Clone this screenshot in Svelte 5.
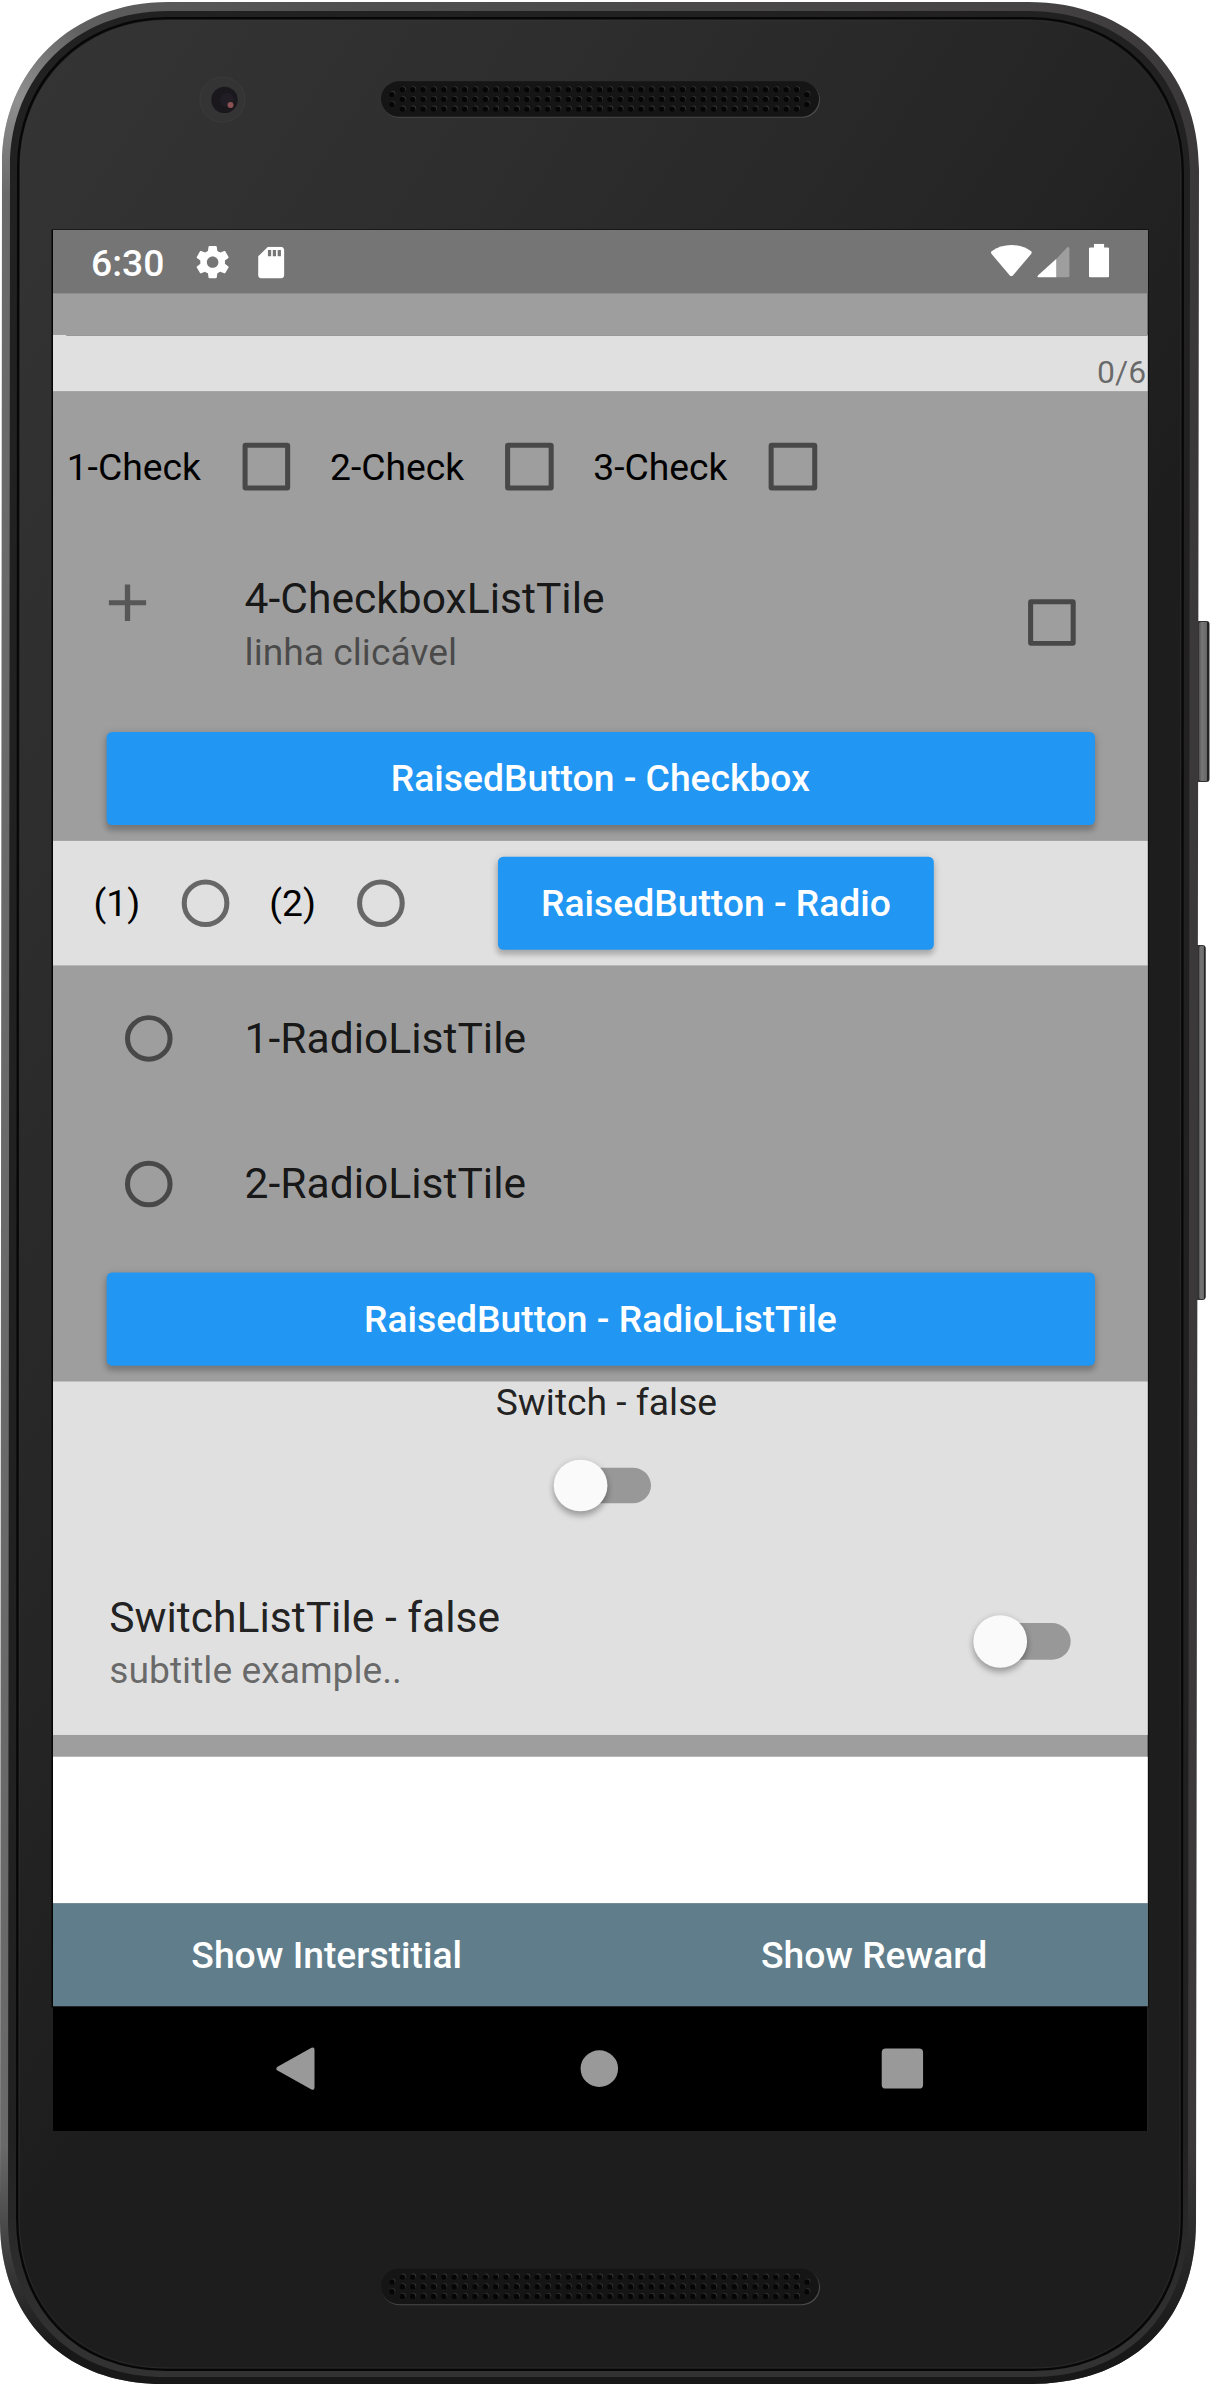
<script>
  const checks = ['1-Check', '2-Check', '3-Check'];
  const radios = ['(1)', '(2)'];
  const radioTiles = ['1-RadioListTile', '2-RadioListTile'];
  const actions = ['Show Interstitial', 'Show Reward'];

  // Speaker grilles: three rows of holes, closed by a pair at either end.
  const columns = Array.from({ length: 39 }, (_, i) => 402.4 + i * 10.375);
  const rows = [8.3, 18, 27.7];
  const grilles = [81.3, 2268.7];
  const endHoles = [392, 807];
  const holes = [
    ...columns.flatMap((x) => rows.map((y) => [x, y])),
    ...endHoles.flatMap((x) => [13.2, 23].map((y) => [x, y])),
  ];
</script>

{#snippet switchControl()}
  <span class="switch"><span class="track"></span><span class="thumb"></span></span>
{/snippet}

<main class="device">
  <svg class="body" viewBox="0 0 1210 2385" aria-hidden="true">
    <defs>
      <linearGradient id="rim" x1="0" y1="0" x2="1" y2="0">
        <stop offset="0" stop-color="#6b6a6a" />
        <stop offset="0.1" stop-color="#5c5b5b" />
        <stop offset="0.3" stop-color="#504f4f" />
        <stop offset="0.85" stop-color="#454343" />
        <stop offset="1" stop-color="#3a3838" />
      </linearGradient>
      <radialGradient id="glint" gradientUnits="userSpaceOnUse" cx="18" cy="100" r="95">
        <stop offset="0" stop-color="#a0a0a0" stop-opacity=".7" />
        <stop offset="1" stop-color="#a0a0a0" stop-opacity="0" />
      </radialGradient>
      <linearGradient id="rimShade" x1="0" y1="0" x2="0" y2="1">
        <stop offset="0.9" stop-color="#1a1a1a" stop-opacity="0" />
        <stop offset="0.985" stop-color="#181818" />
      </linearGradient>
      <linearGradient id="lip" x1="0" y1="0" x2="0" y2="1">
        <stop offset="0.9" stop-color="#222121" />
        <stop offset="0.985" stop-color="#323232" />
      </linearGradient>
      <linearGradient id="face" gradientUnits="userSpaceOnUse" x1="0" y1="100" x2="1000" y2="760">
        <stop offset="0" stop-color="#343435" />
        <stop offset="0.35" stop-color="#2e2e2e" />
        <stop offset="0.75" stop-color="#252525" />
        <stop offset="1" stop-color="#1d1d1d" />
      </linearGradient>
      <linearGradient id="key" x1="0" y1="0" x2="1" y2="0">
        <stop offset="0" stop-color="#555" />
        <stop offset="0.3" stop-color="#777" />
        <stop offset="0.75" stop-color="#666" />
        <stop offset="0.85" stop-color="#222" />
      </linearGradient>
    </defs>
    <rect x="1190" y="621" width="19.5" height="161" rx="3" fill="#333" />
    <rect x="1199" y="622" width="10" height="159" rx="2" fill="url(#key)" />
    <rect x="1190" y="945" width="15.5" height="355" rx="3" fill="#333" />
    <rect x="1199" y="946" width="6.5" height="353" rx="2" fill="url(#key)" />

    {#each ['rim', 'glint', 'rimShade'] as paint}
      <path fill="url(#{paint})" d="M168 2H1028C1130 2 1199 70 1199 170L1196 2222C1196 2322 1132 2383 1032 2384H162C64 2384 0 2318 0 2222L2 164C2 70 72 2 168 2Z" />
    {/each}
    <path fill="url(#lip)" d="M168 11H1028C1124 11 1190 76 1190 172L1188 2220C1188 2312 1128 2377 1034 2377H164C70 2377 8 2312 8 2220L10 166C10 76 76 11 168 11Z" />
    <path fill="#111" stroke="#070707" stroke-width="2" d="M168 18H1028C1118 18 1183 82 1183 174L1182 2218C1182 2308 1122 2370 1034 2370H166C76 2370 17 2308 17 2218L18 168C18 82 80 18 168 18Z" />
    <path fill="url(#face)" stroke="#3c3c3c" stroke-opacity=".5" d="M168 20H1028C1116 20 1181 84 1181 174L1180 2218C1180 2306 1120 2368 1034 2368H166C78 2368 19 2306 19 2218L20 168C20 84 82 20 168 20Z" />

    <circle cx="222.5" cy="99.7" r="22.5" fill="#343434" stroke="#3b3b3b" />
    <circle cx="224.500" cy="99.9" r="13.2" fill="#1a181d" />
    <circle cx="227" cy="100" r="7" fill="#211d25" />
    <circle cx="230.5" cy="105" r="3" fill="#8b5153" />

    {#each grilles as top}
      <g transform="translate(0 {top})">
        <rect x="381.5" y="1" width="438.5" height="35.5" rx="17.7" fill="#4a4a4a" />
        <rect x="381" y="0" width="438" height="35.5" rx="17.7" fill="#151515" />
        {#each holes as [x, y]}
          <circle cx={x + 0.8} cy={y - 0.8} r="2.6" fill="#333" />
          <circle cx={x} cy={y} r="2.6" fill="#050505" />
        {/each}
      </g>
    {/each}
    <rect x="51.5" y="229.5" width="1097" height="1778" fill="#050505" />
  </svg>

  <div class="screen">
    <header class="status">
      <span class="time">6:30</span>
      <svg class="gear" viewBox="0 0 24 24"><path d="M19.43 12.98c.04-.32.07-.64.07-.98s-.03-.66-.07-.98l2.11-1.65c.19-.15.24-.42.12-.64l-2-3.46c-.12-.22-.39-.3-.61-.22l-2.49 1c-.52-.4-1.08-.73-1.69-.98l-.38-2.65C14.46 2.18 14.25 2 14 2h-4c-.25 0-.46.18-.49.42l-.38 2.65c-.61.25-1.17.59-1.69.98l-2.49-1c-.23-.09-.49 0-.61.22l-2 3.46c-.13.22-.07.49.12.64l2.11 1.65c-.04.32-.07.65-.07.98s.03.66.07.98l-2.11 1.65c-.19.15-.24.42-.12.64l2 3.46c.12.22.39.3.61.22l2.49-1c.52.4 1.08.73 1.69.98l.38 2.65c.03.24.24.42.49.42h4c.25 0 .46-.18.49-.42l.38-2.65c.61-.25 1.17-.59 1.69-.98l2.49 1c.23.09.49 0 .61-.22l2-3.46c.12-.22.07-.49-.12-.64l-2.11-1.65zM12 15.5c-1.93 0-3.5-1.57-3.5-3.5s1.57-3.5 3.5-3.5 3.5 1.57 3.5 3.5-1.57 3.5-3.5 3.5z" /></svg>
      <svg class="card" viewBox="4 2 16 20"><path d="M18 2h-8L4.02 8 4 20c0 1.1.9 2 2 2h12c1.1 0 2-.9 2-2V4c0-1.1-.9-2-2-2zm-6 6h-2V4h2v4zm3 0h-2V4h2v4zm3 0h-2V4h2v4z" /></svg>
      <span class="spacer"></span>
      <svg class="wifi" viewBox="0 0 41 32"><path d="M1 6.5C12-2 29-2 40 6.500Q41 7.500 40.200 9L22 31Q20.500 32.500 19 31L.8 9Q0 7.500 1 6.500Z" /></svg>
      <svg class="signal" viewBox="0 0 32 31"><path opacity=".3" d="M18.500 12.500 29.500.8Q32-.8 32 2V29Q32 31 30 31H18.500Z" /><path d="M18.700 12.300V31H1.500Q-.8 31 .7 29Z" /></svg>
      <svg class="battery" viewBox="0 0 20 34"><path d="M5 0H15V3.800H18.500Q20 3.800 20 5.300V32.500Q20 34 18.500 34H1.500Q0 34 0 32.500V5.300Q0 3.800 1.500 3.800H5Z" /></svg>
    </header>

    <div class="gap"></div>
    <section class="field"><span class="underline"></span><span class="counter">0/6</span></section>

    <section class="dark checks">
      <div class="checkrow">
        {#each checks as label}
          <span class="checklabel">{label}</span>
          <span class="target"><span class="box"></span></span>
        {/each}
      </div>
      <div class="tile two">
        <svg class="plus" viewBox="0 0 24 24"><path d="M19 13h-6v6h-2v-6H5v-2h6V5h2v6h6z" /></svg>
        <div class="lines"><div class="title">4-CheckboxListTile</div><div class="sub">linha clicável</div></div>
        <span class="target small"><span class="box"></span></span>
      </div>
      <div class="wide"><button>RaisedButton - Checkbox</button></div>
    </section>

    <section class="light radiorow">
      {#each radios as label}
        <span class="radiolabel">{label}</span>
        <span class="target"><span class="ring"></span></span>
      {/each}
      <button class="compact">RaisedButton - Radio</button>
    </section>

    <section class="dark">
      {#each radioTiles as label}
        <div class="tile one">
          <span class="target small"><span class="ring"></span></span>
          <div class="title">{label}</div>
        </div>
      {/each}
      <div class="wide"><button>RaisedButton - RadioListTile</button></div>
    </section>

    <section class="light switches">
      <div class="switchlabel">Switch - false</div>
      <div class="switchrow">{@render switchControl()}</div>
      <div class="tile two">
        <div class="lines"><div class="title">SwitchListTile - false</div><div class="sub">subtitle example..</div></div>
        <div class="end">{@render switchControl()}</div>
      </div>
    </section>
    <div class="strip"></div>
    <div class="blank"></div>

    <div class="actions">
      {#each actions as label}<span>{label}</span>{/each}
    </div>
    <nav>
      <svg viewBox="0 0 50 50"><path d="M41 4Q44 2.500 44 6V44Q44 47.500 41 46L7.500 27Q5 25 7.500 23Z" /></svg>
      <svg viewBox="0 0 50 50"><circle cx="26" cy="25" r="18.500" /></svg>
      <svg viewBox="0 0 50 50"><rect x="4.600" y="4.800" width="40.800" height="40.400" rx="4" /></svg>
    </nav>
  </div>
</main>

<style>
  :global(body) { margin: 0; background: #fff; }
  .device {
    position: relative;
    box-sizing: border-box;
    width: 1210px;
    height: 2385px;
    padding: 230px 0 0 52.7px;
    overflow: hidden;
    font-family: Roboto, sans-serif;
  }
  .body { position: absolute; inset: 0; width: 1210px; height: 2385px; }
  /* A 1080x1920 display fitted to the opening of the frame. */
  .screen {
    position: relative;
    display: flex;
    flex-direction: column;
    width: 1080px;
    height: 1920px;
    transform: scale(1.0136, 0.9901);
    transform-origin: 0 0;
    background: #9e9e9e;
    color: rgba(0, 0, 0, 0.87);
    font-size: 36.75px;
    line-height: 42px;
    white-space: nowrap;
  }
  .status {
    display: flex;
    align-items: center;
    box-sizing: border-box;
    height: 63.5px;
    padding: 2px 38.5px 0 37.5px;
    background: #757575;
    color: #fff;
  }
  .status svg { flex: none; fill: #fff; }
  .time { width: 100px; font-weight: 500; font-size: 36.75px; padding-top: 3px; }
  .gear { width: 39px; height: 39px; }
  .card { width: 26.5px; height: 32px; margin-left: 25.5px; }
  .spacer { flex: 1; }
  .wifi { width: 41px; height: 32px; margin-top: -3px; }
  .signal { width: 32px; height: 31px; margin-left: 5px; }
  .battery { width: 20px; height: 34px; margin-left: 19px; margin-top: -3px; }

  .gap { height: 42px; }
  .field { display: flex; flex-wrap: wrap; justify-content: flex-end; height: 57.5px; background: #e0e0e0; }
  .underline { width: 1067px; height: 1.5px; background: #949494; }
  .counter { width: 100%; text-align: right; box-sizing: border-box; padding: 18px 1.5px 0 0; font-size: 31.5px; line-height: 37px; color: rgba(0, 0, 0, 0.54); }

  .dark { background: #9e9e9e; }
  .light { background: #e0e0e0; }
  .checks { padding-top: 13px; height: 441px; }
  .checkrow { display: flex; align-items: center; height: 126px; padding-left: 13.5px; color: #000; }
  .checklabel { width: 133.8px; padding-top: 2px; }
  .target { display: flex; flex: none; align-items: center; justify-content: center; width: 126px; height: 126px; }
  .small { width: 105px; height: 105px; }
  .box, .ring { box-sizing: border-box; width: 47.25px; height: 47.25px; border: 5.25px solid rgba(0, 0, 0, 0.54); border-radius: 3px; }
  .ring { border-radius: 50%; }

  .tile { display: flex; align-items: center; box-sizing: border-box; padding: 0 42px; }
  .two { height: 189px; }
  .one { height: 147px; gap: 42px; }
  .plus { width: 63px; height: 63px; margin-right: 84px; align-self: flex-start; margin-top: 42.5px; fill: rgba(0, 0, 0, 0.45); }
  .lines { flex: 1; align-self: flex-start; padding-top: 46px; }
  .title { font-size: 42px; line-height: 49px; }
  .sub { padding-top: 8px; line-height: 43px; color: rgba(0, 0, 0, 0.54); }

  .wide { display: flex; box-sizing: border-box; height: 126px; padding: 15.75px 52.5px; }
  button {
    flex: 1;
    height: 94.5px;
    padding: 2.5px 42px 0;
    border: 0;
    border-radius: 5.25px;
    background: #2196f3;
    box-shadow: 0 5px 5px rgba(0, 0, 0, 0.16), 0 2px 8px rgba(0, 0, 0, 0.14);
    color: #fff;
    font: 500 36.75px/42px Roboto, sans-serif;
  }
  .radiorow { display: flex; align-items: center; height: 126px; padding-left: 40px; color: #000; }
  .radiolabel { width: 47.3px; padding-top: 2px; }
  .compact { flex: none; width: 430px; margin-left: 52.5px; padding: 2.5px 0 0; }

  .switches { height: 357px; }
  .switchlabel { height: 42px; line-height: 44px; padding-left: 12px; text-align: center; }
  .switchrow { display: flex; align-items: center; justify-content: center; height: 126px; padding-left: 13px; }
  .switches .tile { padding-left: 55.5px; }
  .switch { display: flex; align-items: center; box-sizing: border-box; width: 155px; height: 105px; padding-left: 34px; }
  .track { flex: none; width: 86.6px; height: 36.75px; border-radius: 18.4px; background: #989898; }
  .thumb { flex: none; width: 52.5px; height: 52.5px; margin-left: -95.5px; border-radius: 50%; background: #fafafa; box-shadow: 0 5px 6px rgba(0, 0, 0, 0.24), 0 1px 7px rgba(0, 0, 0, 0.14); }
  .strip { height: 22px; }
  .blank { height: 148px; background: #fff; }

  .actions { display: flex; align-items: center; box-sizing: border-box; height: 104px; padding-top: 2px; background: #607d8b; color: #fff; font-weight: 500; text-align: center; }
  .actions span { flex: 1; }
  nav { display: flex; align-items: center; justify-content: space-between; box-sizing: border-box; flex: 1; padding: 0 217px 0 213.5px; background: #000; }
  nav svg { width: 50px; height: 50px; fill: #999; }
</style>
